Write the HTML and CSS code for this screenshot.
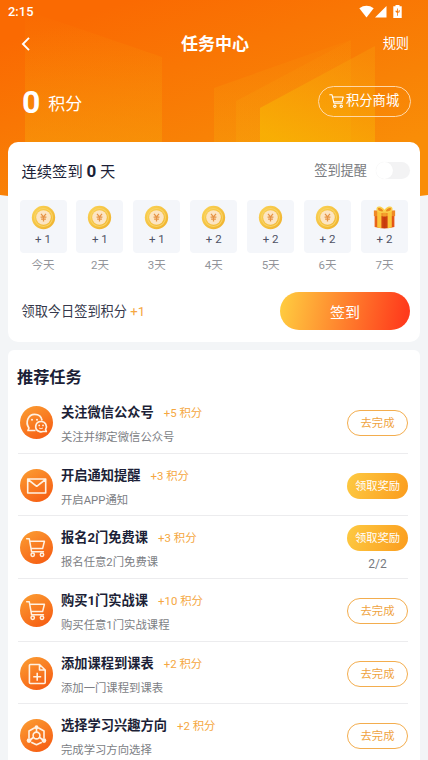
FILE: index.html
```html
<!DOCTYPE html>
<html lang="zh-CN">
<head>
<meta charset="utf-8">
<meta name="viewport" content="width=device-width, initial-scale=1">
<title>任务中心</title>
<link rel="stylesheet" href="styles.css">
</head>
<body>
<svg class="defs" width="0" height="0" aria-hidden="true">
  <defs>
    <linearGradient id="orange" x1="0.2" y1="0" x2="0.8" y2="1"><stop offset="0" stop-color="#fb9a31"/><stop offset="1" stop-color="#f65c12"/></linearGradient>
    <linearGradient id="gold" x1="0" y1="0" x2="1" y2="1"><stop offset="0" stop-color="#fbd457"/><stop offset="1" stop-color="#efb02b"/></linearGradient>
    <linearGradient id="box" x1="0" y1="0" x2="1" y2="0"><stop offset="0" stop-color="#ed6a1d"/><stop offset="0.5" stop-color="#c63a0c"/><stop offset="1" stop-color="#e85a18"/></linearGradient>
  </defs>
  <symbol id="coin" viewBox="0 0 24 24">
    <circle cx="12" cy="12" r="11.2" fill="url(#gold)"/>
    <circle cx="12" cy="12" r="8.6" fill="none" stroke="#f8d468" stroke-width="1"/>
    <circle cx="12" cy="12" r="7" fill="#fce5c3"/>
    <path d="M9.600 8.500 12 11.400l2.400-2.900M9.200 11.600h5.600M9.700 13.600h4.600M12 11.400v4.400" fill="none" stroke="#e69345" stroke-width="1.200"/>
  </symbol>
  <symbol id="gift" viewBox="0 0 24 24">
    <path d="M2.500 10h19v11.200q-9.500 2.600-19 0z" fill="url(#box)"/>
    <path d="M1.800 5.200h20.400v5.500H1.800z" fill="#ef8a27"/>
    <path d="M5 5h4v17.200l-4-.5zM15 5h4v16.700l-4 .5z" fill="#fbc53b"/>
    <path d="M10.200 7h3.600v4h-3.600z" fill="#f3a02c"/>
    <path d="M12 6.500C10 1.500 5 1 5 3.800S9 7.500 12 6.500zM12 6.500C14 1.500 19 1 19 3.800S15 7.500 12 6.500z" fill="#e98a1f" stroke="#fbd04b" stroke-width="1.500"/>
  </symbol>
  <symbol id="cart" viewBox="0 0 20 20">
    <path d="M1 2.200h2.800l2.400 10.600h10.300M4.300 5h13.500l-1.500 6H5.800" fill="none" stroke="currentColor" stroke-width="1.400" stroke-linejoin="round" stroke-linecap="round"/>
    <circle cx="7.300" cy="16.600" r="1.500" fill="none" stroke="currentColor" stroke-width="1.400"/>
    <circle cx="15.300" cy="16.600" r="1.500" fill="none" stroke="currentColor" stroke-width="1.400"/>
  </symbol>
  <symbol id="task-wechat" viewBox="0 0 33 33">
    <circle cx="16.500" cy="16.500" r="16.500" fill="url(#orange)"/>
    <g fill="none" stroke="#fff1e2" stroke-width="1.700" stroke-linejoin="round">
      <path d="M15.500 24.500H8l.9-2.500C4.900 16.300 8.300 8.300 14.600 8.300c4 0 6.900 2.600 7.500 6.200"/>
      <path d="M21.200 15.500c-6.500 0-7.500 8.600-1.500 10.100 1.100.3 2.200.2 3.200-.1h3.400l-.7-2.100c2.200-3.500-.4-7.900-4.400-7.900z"/>
    </g>
    <g fill="#fff1e2"><circle cx="12" cy="13.800" r="1"/><circle cx="17" cy="13.800" r="1"/><circle cx="19.200" cy="19.400" r=".9"/><circle cx="23" cy="19.400" r=".9"/></g>
    <path d="M19 22q2 1.500 4 0" fill="none" stroke="#fff1e2" stroke-width=".9"/>
  </symbol>
  <symbol id="task-mail" viewBox="0 0 33 33">
    <circle cx="16.500" cy="16.500" r="16.500" fill="url(#orange)"/>
    <path d="M7.700 10h18v14h-18zM8 10.500l8.700 6.800 8.700-6.800" fill="none" stroke="#fff1e2" stroke-width="1.600" stroke-linejoin="round"/>
  </symbol>
  <symbol id="task-cart" viewBox="0 0 33 33">
    <circle cx="16.500" cy="16.500" r="16.500" fill="url(#orange)"/>
    <g fill="none" stroke="#fff1e2" stroke-width="1.500" stroke-linejoin="round" stroke-linecap="round">
      <path d="M6.700 7.800h2.600l2.300 13h11.800M9.800 10.300h14.600l-1.800 7.300H11.200"/>
      <circle cx="12.700" cy="23.800" r="1.700"/><circle cx="22" cy="23.800" r="1.700"/>
    </g>
  </symbol>
  <symbol id="task-file" viewBox="0 0 33 33">
    <circle cx="16.500" cy="16.500" r="16.500" fill="url(#orange)"/>
    <path d="M19.500 7.500H10.400q-1 0-1 1v17q0 1 1 1h13.800q1 0 1-1V13zM19.500 7.500V13h5.700M17.200 15.700v8M13.200 19.700h8" fill="none" stroke="#fff1e2" stroke-width="1.600" stroke-linejoin="round"/>
  </symbol>
  <symbol id="task-study" viewBox="0 0 33 33">
    <circle cx="16.500" cy="16.500" r="16.500" fill="url(#orange)"/>
    <g fill="none" stroke="#fff1e2" stroke-width="1.600" stroke-linejoin="round">
      <path d="M14.800 8.700 9 12v7.500M18.200 8.700 24 12v7.500M11.200 23.200l5.300 2.600 5.300-2.600M16.500 9.500v4.500M14 18l-4 3M19 18l4 3"/>
      <circle cx="16.500" cy="16.500" r="3.400"/>
    </g>
    <g fill="#fff1e2"><circle cx="16.500" cy="8.300" r="2"/><circle cx="9" cy="21.600" r="2.300"/><circle cx="24" cy="21.600" r="2.300"/></g>
  </symbol>
</svg>

<main class="screen">
  <svg class="backdrop" viewBox="0 0 428 212" aria-hidden="true">
    <defs>
      <linearGradient id="sky" gradientUnits="userSpaceOnUse" x1="130" y1="0" x2="200" y2="210"><stop offset="0" stop-color="#fa6a02"/><stop offset="0.7" stop-color="#f88206"/><stop offset="1" stop-color="#f98d07"/></linearGradient>
      <linearGradient id="face" x1="0" y1="0" x2="0" y2="1"><stop offset="0" stop-color="#f8980a" stop-opacity="0"/><stop offset="1" stop-color="#f79e0a" stop-opacity="0.550"/></linearGradient>
      <linearGradient id="side" x1="0" y1="0" x2="0" y2="1"><stop offset="0" stop-color="#f8980a" stop-opacity="0.100"/><stop offset="1" stop-color="#f7a00a" stop-opacity="0.450"/></linearGradient>
      <linearGradient id="front" x1="0.8" y1="0" x2="0.3" y2="1"><stop offset="0" stop-color="#f9960a" stop-opacity="0.450"/><stop offset="1" stop-color="#f8b004" stop-opacity="0.900"/></linearGradient>
    </defs>
    <path d="M0 0h428v195Q214 224 0 195z" fill="url(#sky)"/>
    <path d="M25 10 162 57v90H25z" fill="url(#face)"/>
    <path d="M214 88 330 47 351 40v107H214z" fill="url(#side)"/>
    <path d="M236 101 351 40v107H236z" fill="url(#side)"/>
    <path d="M260 108 375 46v101H260z" fill="url(#front)"/>
  </svg>

  <header class="hero">
    <div class="status">
      <span class="clock">2:15</span>
      <svg width="44" height="14" viewBox="0 0 44 14" fill="#fff" aria-hidden="true">
        <path d="M.3 3.200Q7.500-1.600 14.700 3.200L7.500 12.500z"/>
        <path d="M27.500 1v11.500H16z"/>
        <path fill-rule="evenodd" d="M36.500 1.200V0h4v1.200h2.200V13h-8.400V1.200zM38.200 3.500v2.300h-2l.8 1.500 1.200.4v3h.8v-3l1.600-.5V5h-.8v1.400l-.8.2V3.500z"/>
      </svg>
    </div>
    <nav class="bar">
      <svg width="10" height="14" viewBox="0 0 10 14" fill="none" stroke="#fff" stroke-width="1.900" aria-hidden="true"><path d="M8 .8 1.900 7 8 13.200"/></svg>
      <h1>任务中心</h1>
      <span class="rules">规则</span>
    </nav>
    <div class="balance">
      <b>0</b><span class="unit">积分</span>
      <a class="mall"><svg width="16" height="16"><use href="#cart"/></svg>积分商城</a>
    </div>
  </header>

  <section class="card checkin">
    <div class="streak">
      <h2>连续签到 <b>0</b> 天</h2>
      <span class="remind">签到提醒</span>
      <span class="switch"></span>
    </div>
    <ol class="days">
      <li><div class="tile"><svg><use href="#coin"/></svg>+ 1</div>今天</li>
      <li><div class="tile"><svg><use href="#coin"/></svg>+ 1</div>2天</li>
      <li><div class="tile"><svg><use href="#coin"/></svg>+ 1</div>3天</li>
      <li><div class="tile"><svg><use href="#coin"/></svg>+ 2</div>4天</li>
      <li><div class="tile"><svg><use href="#coin"/></svg>+ 2</div>5天</li>
      <li><div class="tile"><svg><use href="#coin"/></svg>+ 2</div>6天</li>
      <li><div class="tile"><svg><use href="#gift"/></svg>+ 2</div>7天</li>
    </ol>
    <div class="claim">
      <span>领取今日签到积分 <em>+1</em></span>
      <button class="sign">签到</button>
    </div>
  </section>

  <section class="card tasks">
    <h2>推荐任务</h2>
    <ul>
      <li class="task"><svg class="icon"><use href="#task-wechat"/></svg><div class="info"><h3>关注微信公众号<em>+5 积分</em></h3><p>关注并绑定微信公众号</p></div><div class="action"><button class="go">去完成</button></div></li>
      <li class="task"><svg class="icon"><use href="#task-mail"/></svg><div class="info"><h3>开启通知提醒<em>+3 积分</em></h3><p>开启APP通知</p></div><div class="action"><button class="go reward">领取奖励</button></div></li>
      <li class="task"><svg class="icon"><use href="#task-cart"/></svg><div class="info"><h3>报名2门免费课<em>+3 积分</em></h3><p>报名任意2门免费课</p></div><div class="action"><button class="go reward">领取奖励</button><span class="progress">2/2</span></div></li>
      <li class="task"><svg class="icon"><use href="#task-cart"/></svg><div class="info"><h3>购买1门实战课<em>+10 积分</em></h3><p>购买任意1门实战课程</p></div><div class="action"><button class="go">去完成</button></div></li>
      <li class="task"><svg class="icon"><use href="#task-file"/></svg><div class="info"><h3>添加课程到课表<em>+2 积分</em></h3><p>添加一门课程到课表</p></div><div class="action"><button class="go">去完成</button></div></li>
      <li class="task"><svg class="icon"><use href="#task-study"/></svg><div class="info"><h3>选择学习兴趣方向<em>+2 积分</em></h3><p>完成学习方向选择</p></div><div class="action"><button class="go">去完成</button></div></li>
    </ul>
  </section>
</main>
</body>
</html>
```
FILE: styles.css
```css
* { box-sizing: border-box; margin: 0; padding: 0; }
body { background: #f3f5f7; font-family: Roboto, "Noto Sans CJK SC", sans-serif; color: #1c1f37; overflow: hidden; }
em { font-style: normal; color: #f5a741; }
ol, ul { list-style: none; }
button { font: inherit; border: 0; }
.defs { position: absolute; }
.screen { position: relative; width: 428px; height: 760px; overflow: hidden; }
.backdrop { position: absolute; top: 0; left: 0; width: 428px; height: 212px; }

.hero { position: relative; height: 142px; color: #fff; }
.status { display: flex; justify-content: space-between; align-items: center; height: 24px; padding: 0 25px 0 8px; }
.clock { font-size: 12.800px; font-weight: 500; line-height: 24px; letter-spacing: .1px; }
.status svg { margin-top: -1px; }
.bar { display: grid; grid-template-columns: 80px 1fr 80px; align-items: center; height: 40px; padding: 0 19px 0 21px; }
.bar h1 { font-size: 17px; line-height: 40px; font-weight: 700; text-align: center; }
.rules { margin-top: -3px; font-size: 13.200px; text-align: right; }
.balance { display: flex; align-items: center; height: 76px; padding: 0 17px 0 22px; }
.balance b { font-size: 32px; line-height: 40px; }
.unit { margin-left: 8px; font-size: 17px; line-height: 24px; padding-top: 4px; }
.mall { display: flex; align-items: center; gap: 1px; width: 93px; height: 31px; margin: -2px 0 0 auto; padding-left: 10px; border: 1px solid #ffd8a8; border-radius: 16px; font-size: 13.300px; line-height: 20px; white-space: nowrap; }

.card { position: relative; width: 412.500px; margin-left: 7.500px; background: #fff; border-radius: 10px; }
.checkin { height: 200px; padding: 15px 10px 0 14px; }
.streak { display: flex; align-items: center; height: 28px; }
.streak h2 { flex: 1; font-size: 15.300px; font-weight: 400; line-height: 28px; }
.streak b { font-size: 17px; }
.remind { font-size: 13.200px; color: #797b80; line-height: 28px; }
.switch { width: 34px; height: 17px; margin: -1px 0 0 9px; border-radius: 9px; background: #f3f3f4; }
.switch::before { content: ""; display: block; width: 17px; height: 17px; border-radius: 50%; background: #fff; box-shadow: 0 0 1px #eee; }
.days { display: flex; justify-content: space-between; margin: 15px 2px 0 -2px; }
.days li { width: 47px; text-align: center; font-size: 11.500px; line-height: 24px; color: #92949a; }
.tile { height: 53px; padding-top: 5px; border-radius: 4px; background: #f4f6fa; color: #4e5265; font-size: 11.500px; line-height: 15px; }
.tile svg { display: block; width: 25px; height: 25px; margin: 0 auto 2px; }
.claim { display: flex; justify-content: space-between; align-items: center; margin-top: 15px; font-size: 13.200px; color: #35384b; }
.claim span { margin-top: -2px; }
.sign { width: 130px; height: 38px; border-radius: 19px; color: #fff; font-size: 15px; background: linear-gradient(100deg, #ffca3f 3%, #ff3b1c 95%); }

.tasks { height: 430px; margin-top: 8px; padding: 14px 12px 0 9.500px; border-radius: 6px; }
.tasks h2 { font-size: 16.200px; line-height: 27px; font-weight: 700; }
.tasks ul { margin-left: 1px; }
.task { display: flex; align-items: center; height: 62.700px; padding-left: 2px; border-bottom: 1px solid #ececee; }
.icon { width: 33px; height: 33px; flex: none; margin-top: 1px; }
.info { flex: 1; margin: 6px 0 0 8px; }
.info h3 { height: 22px; font-size: 13.250px; line-height: 22px; font-weight: 700; white-space: nowrap; }
.info em { margin-left: 10px; font-size: 11.400px; font-weight: 400; }
.info p { margin-top: 2px; font-size: 11.350px; line-height: 22px; color: #7c7e84; }
.action { display: flex; flex-direction: column; align-items: center; width: 61px; margin: 2px 0 0; }
.go { width: 61px; height: 26px; border: 1px solid #f3ad4e; border-radius: 13px; background: #fff; color: #efa340; font-size: 11.300px; line-height: 25px; }
.reward { border: 0; color: #fff; background: linear-gradient(110deg, #fdca42, #fb9c1d); line-height: 27px; }
.progress { margin: 6px 0 0; font-size: 12px; line-height: 14px; color: #77797e; }
```
